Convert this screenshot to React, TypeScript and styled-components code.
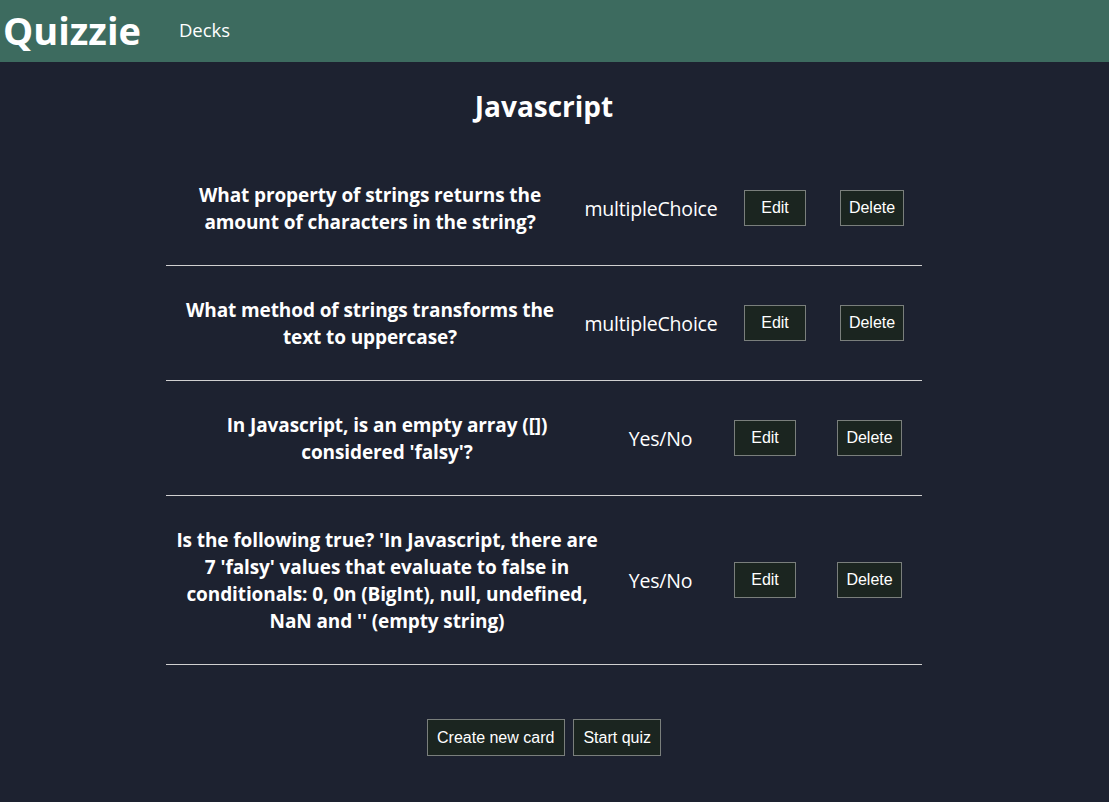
import React from "react";
import styled, { createGlobalStyle } from "styled-components";

const GlobalStyle = createGlobalStyle`
  html, body {
    margin: 0;
    padding: 0;
    background: #1d2230;
  }
  body {
    font-family: "Open Sans", "Noto Sans", sans-serif;
    color: #ffffff;
  }
`;

const Page = styled.div`
  min-height: 802px;
  background: #1d2230;
  display: flex;
  flex-direction: column;
`;

const Header = styled.header`
  height: 62px;
  background: #3d6b5f;
  display: flex;
  align-items: center;
  padding-left: 3px;
  box-sizing: border-box;
`;

const Logo = styled.h1`
  margin: 0;
  font-size: 38px;
  font-weight: 700;
  color: #ffffff;
  line-height: 1;
  padding-bottom: 2px;
`;

const NavLink = styled.a`
  margin-left: 38px;
  font-size: 18.5px;
  color: #ffffff;
  text-decoration: none;
  padding-bottom: 4px;
`;

const Main = styled.main`
  display: flex;
  flex-direction: column;
  align-items: center;
  padding-right: 21px;
`;

const Content = styled.div`
  width: 756px;
  display: flex;
  flex-direction: column;
  align-items: center;
`;

const Title = styled.h2`
  margin: 25px 0 0;
  font-size: 28px;
  font-weight: 700;
  line-height: 38px;
`;

const CardList = styled.div`
  width: 100%;
  margin-top: 26px;
  display: flex;
  flex-direction: column;
`;

const CardRow = styled.div<{ $cols: string }>`
  display: grid;
  grid-template-columns: ${(p) => p.$cols};
  align-items: center;
  padding: 30px 0;
  border-bottom: 1px solid #d0d0d0;
`;

const QuestionCell = styled.div<{ $pad: string }>`
  padding: ${(p) => p.$pad};
`;

const Question = styled.p`
  margin: 0 0 -1px;
  padding-top: 1px;
  font-size: 19px;
  font-weight: 700;
  line-height: 27px;
  text-align: center;
  letter-spacing: -0.1px;
`;

const CardType = styled.span`
  font-size: 19.5px;
  text-align: center;
  letter-spacing: -0.2px;
`;

const Cell = styled.div`
  display: flex;
  justify-content: center;
`;

const Button = styled.button`
  font-family: "Liberation Sans", Arial, sans-serif;
  font-size: 16px;
  color: #ffffff;
  background: #1b2520;
  border: 1px solid #7a7f7c;
  height: 36px;
  min-width: 62px;
  padding: 0 8px;
  box-sizing: border-box;
  cursor: pointer;
`;

const Actions = styled.div`
  display: flex;
  gap: 8px;
  margin-top: 54px;
`;

const BigButton = styled(Button)`
  height: 37px;
  padding: 0 9.5px;
`;

type Card = { q: string; type: "multipleChoice" | "Yes/No" };

const cards: Card[] = [
  { q: "What property of strings returns the amount of characters in the string?", type: "multipleChoice" },
  { q: "What method of strings transforms the text to uppercase?", type: "multipleChoice" },
  { q: "In Javascript, is an empty array ([]) considered 'falsy'?", type: "Yes/No" },
  {
    q: "Is the following true? 'In Javascript, there are 7 'falsy' values that evaluate to false in conditionals: 0, 0n (BigInt), null, undefined, NaN and '' (empty string)",
    type: "Yes/No",
  },
];

const layouts: Record<Card["type"], { cols: string; qPad: string }> = {
  multipleChoice: { cols: "408px 154px 94px 100px", qPad: "0 18px" },
  "Yes/No": { cols: "442px 105px 104px 105px", qPad: "0 8px" },
};

export default function App() {
  return (
    <Page>
      <GlobalStyle />
      <Header>
        <Logo>Quizzie</Logo>
        <NavLink href="#">Decks</NavLink>
      </Header>
      <Main>
        <Content>
          <Title>Javascript</Title>
          <CardList>
            {cards.map((c, i) => (
              <CardRow key={i} $cols={layouts[c.type].cols}>
                <QuestionCell $pad={layouts[c.type].qPad}>
                  <Question>{c.q}</Question>
                </QuestionCell>
                <CardType>{c.type}</CardType>
                <Cell>
                  <Button>Edit</Button>
                </Cell>
                <Cell>
                  <Button>Delete</Button>
                </Cell>
              </CardRow>
            ))}
          </CardList>
          <Actions>
            <BigButton>Create new card</BigButton>
            <BigButton>Start quiz</BigButton>
          </Actions>
        </Content>
      </Main>
    </Page>
  );
}
